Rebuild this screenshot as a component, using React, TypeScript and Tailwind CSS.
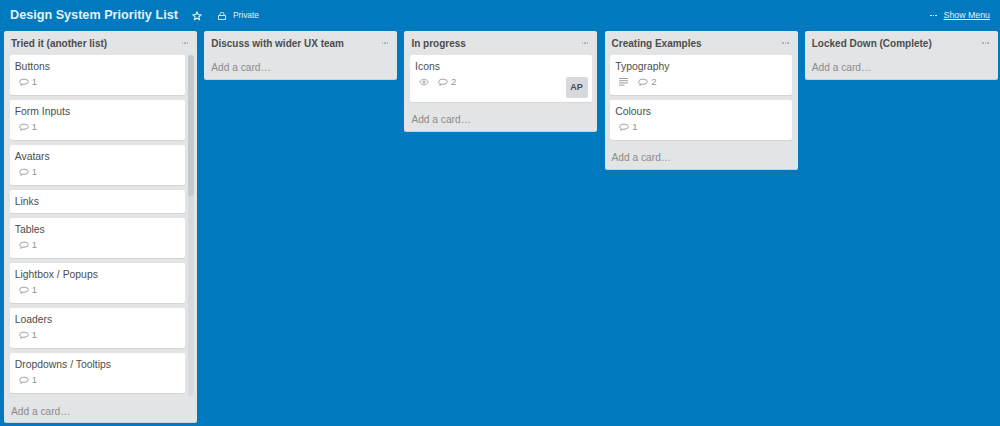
import React from 'react';

type CardData = {
  title: string;
  comments?: number;
  watching?: boolean;
  description?: boolean;
  member?: string;
};

type ListData = {
  title: string;
  cards: CardData[];
};

const lists: ListData[] = [
  {
    title: 'Tried it (another list)',
    cards: [
      { title: 'Buttons', comments: 1 },
      { title: 'Form Inputs', comments: 1 },
      { title: 'Avatars', comments: 1 },
      { title: 'Links' },
      { title: 'Tables', comments: 1 },
      { title: 'Lightbox / Popups', comments: 1 },
      { title: 'Loaders', comments: 1 },
      { title: 'Dropdowns / Tooltips', comments: 1 },
    ],
  },
  { title: 'Discuss with wider UX team', cards: [] },
  {
    title: 'In progress',
    cards: [{ title: 'Icons', watching: true, comments: 2, member: 'AP' }],
  },
  {
    title: 'Creating Examples',
    cards: [
      { title: 'Typography', description: true, comments: 2 },
      { title: 'Colours', comments: 1 },
    ],
  },
  { title: 'Locked Down (Complete)', cards: [] },
];

function CommentIcon() {
  return (
    <svg width="10" height="9" viewBox="0 0 10 9" fill="none" stroke="#8c9499" strokeWidth="0.9">
      <path d="M5 1.2C2.6 1.2.7 2.2.7 3.7c0 .9.6 1.6 1.5 2l-.4 1.7 2-1.2H5c2.4 0 4.3-1 4.3-2.5S7.4 1.2 5 1.2z" />
    </svg>
  );
}

function EyeIcon() {
  return (
    <svg width="10" height="8" viewBox="0 0 10 8" fill="none" stroke="#8c9499" strokeWidth="0.8">
      <path d="M.6 4C2 2 3.4 1.2 5 1.2S8 2 9.4 4C8 6 6.6 6.8 5 6.8S2 6 .6 4z" />
      <circle cx="5" cy="4" r="1.2" />
    </svg>
  );
}

function DescriptionIcon() {
  return (
    <svg width="9" height="8" viewBox="0 0 9 8" fill="none" stroke="#8c9499" strokeWidth="0.9">
      <path d="M0 .5h9M0 2.7h9M0 4.9h9M0 7.1h5.5" />
    </svg>
  );
}

function Dots({ className }: { className: string }) {
  return <span className={`flex gap-[1px] ${className}`}>
    <i className="block w-[1.5px] h-[1.5px] bg-current" />
    <i className="block w-[1.5px] h-[1.5px] bg-current" />
    <i className="block w-[1.5px] h-[1.5px] bg-current" />
  </span>;
}

function Card({ card }: { card: CardData }) {
  const hasBadges = card.comments !== undefined;
  return (
    <div className={`relative bg-white rounded-[2px] shadow-[0_1px_0_#d3d6d8] px-[5px] pt-[4px] ${card.member ? 'pb-[12px]' : hasBadges ? 'pb-[5px]' : 'pb-[4px]'}`}>
      <div className="text-[10.4px] leading-[15px] text-[#4d4d4d]">{card.title}</div>
      {hasBadges && (
        <div className="flex items-center h-[16px] pl-[4px] text-[9.5px] text-[#8c9499]">
          {card.watching && <span className="w-[19px] flex"><EyeIcon /></span>}
          {card.description && <span className="w-[19px] flex"><DescriptionIcon /></span>}
          <CommentIcon />
          <span className="ml-[3px]">{card.comments}</span>
        </div>
      )}
      {card.member && (
        <span className="absolute right-[4px] bottom-[4px] w-[22px] h-[21px] rounded-[2px] bg-[#d6dadc] flex items-center justify-center text-[9px] font-bold text-[#4d4d4d]">
          {card.member}
        </span>
      )}
    </div>
  );
}

function List({ list, scroll }: { list: ListData; scroll?: boolean }) {
  return (
    <section className="w-[193px] shrink-0 self-start bg-[#e2e4e6] rounded-[2px] shadow-[0_1px_0_#ccd2d5]">
      <header className="flex items-center justify-between h-[24px] pl-[7px] pr-[9px]">
        <h2 className="text-[10px] font-bold text-[#4d4d4d]">{list.title}</h2>
        <Dots className="text-[#b0b4b7]" />
      </header>
      {list.cards.length > 0 && (
        <div className="flex">
          <div className={`flex flex-col gap-[5px] ml-[5.7px] ${scroll ? 'w-[175.3px]' : 'w-[181.5px]'}`}>
            {list.cards.map((c) => <Card key={c.title} card={c} />)}
          </div>
          {scroll && (
            <div className="ml-[3px] w-[6px] h-[341px] rounded-[3px] bg-[#d6dadc]">
              <div className="h-[141px] rounded-[3px] bg-[#c4c9cc]" />
            </div>
          )}
        </div>
      )}
      <div className={`px-[7px] pt-[2px] flex items-center text-[10.2px] text-[#8c8c8c] ${scroll ? 'mt-[3px] h-[23px]' : list.cards.length > 0 ? 'mt-[5px] h-[24px]' : 'h-[24px]'}`}>
        Add a card…
      </div>
    </section>
  );
}

export default function App() {
  return (
    <div className="w-[1000px] h-[426px] overflow-hidden bg-[#0079bf] font-['Liberation_Sans',Arial,sans-serif]">
      <div className="flex items-center h-[31px] pl-[10px] pr-[10px] text-[#e4f0f6]">
        <h1 className="text-[12.65px] font-bold">Design System Prioritiy List</h1>
        <svg className="ml-[14px]" width="10" height="10" viewBox="0 0 10 10" fill="none" stroke="currentColor" strokeWidth="1.1">
          <path d="M5 1l1.2 2.6 2.8.3-2.1 1.9.6 2.8L5 7.2 2.5 8.6l.6-2.8L1 3.9l2.8-.3z" />
        </svg>
        <svg className="ml-[16px]" width="8" height="8" viewBox="0 0 8 8" fill="none" stroke="currentColor" strokeWidth="0.9">
          <path d="M.5 3.5h7v4h-7zM2 3.5V2.2a2 2 0 0 1 4 0v1.3" />
        </svg>
        <span className="ml-[7px] text-[8.4px]">Private</span>
        <div className="ml-auto flex items-center">
          <Dots className="text-[#e4f0f6]" />
          <span className="ml-[7px] text-[8.8px] underline">Show Menu</span>
        </div>
      </div>
      <main className="flex gap-[7.2px] pl-[4px]">
        {lists.map((l, i) => <List key={l.title} list={l} scroll={i === 0} />)}
      </main>
    </div>
  );
}
